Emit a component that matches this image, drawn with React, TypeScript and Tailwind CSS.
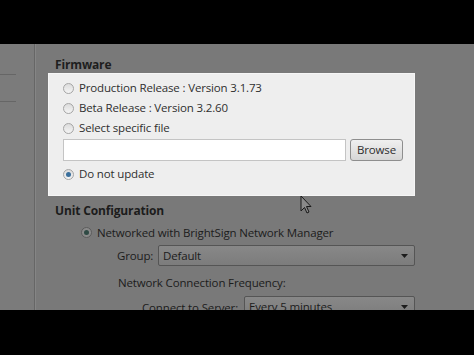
import React from "react";

const font = { fontFamily: '"Open Sans", "Noto Sans", sans-serif' };

function Radio({ checked, dim }: { checked?: boolean; dim?: boolean }) {
  return (
    <span
      className={`relative inline-flex h-[11px] w-[11px] shrink-0 items-center justify-center rounded-full border ${
        dim ? "border-[#5c5c5c] bg-[#8a8a8a]" : "border-[#a5a5a5] bg-gradient-to-b from-[#dcdcdc] to-[#f4f4f4]"
      }`}
    >
      {checked && (
        <span
          className={`h-[5px] w-[5px] rounded-full ${dim ? "bg-[#2f4a44]" : "bg-[#3a6f9c]"}`}
        />
      )}
    </span>
  );
}

function Select({ value, className }: { value: string; className: string }) {
  return (
    <div
      className={`flex h-[21px] shrink-0 items-center justify-between rounded-[2px] border border-[#555] bg-gradient-to-b from-[#888] to-[#7c7c7c] pl-[4px] pr-[6px] text-[11.5px] text-[#1c1c1c] ${className}`}
    >
      <span>{value}</span>
      <svg width="7" height="4" viewBox="0 0 7 4">
        <path d="M0 0h7L3.5 4z" fill="#1c1c1c" />
      </svg>
    </div>
  );
}

function FirmwareBox() {
  const options = ["Production Release : Version 3.1.73", "Beta Release : Version 3.2.60", "Select specific file"];
  return (
    <div className="ml-[12px] w-[367px] border border-[#f6f6f6] bg-[#eeeeee] pb-[11px] pl-[14px] pt-[4px] text-[#2e2e2e]">
      {options.map((o) => (
        <div key={o} className="flex h-[20px] items-center gap-[5px]">
          <Radio />
          <span>{o}</span>
        </div>
      ))}
      <div className="mt-[1px] flex h-[22px] items-center gap-[4px]">
        <div className="h-[22px] w-[283px] border border-[#c4c4c4] bg-white" />
        <button className="flex h-[22px] w-[53px] items-center justify-center rounded-[3px] border border-[#8e8e8e] bg-gradient-to-b from-[#f0f0f0] to-[#d6d6d6] text-[#2e2e2e]">
          Browse
        </button>
      </div>
      <div className="mt-[3px] flex h-[20px] items-center gap-[5px]">
        <Radio checked />
        <span>Do not update</span>
      </div>
    </div>
  );
}

export default function App() {
  return (
    <div className="flex h-[355px] w-[474px] flex-col overflow-hidden bg-black text-[11.5px] tracking-[-0.15px]" style={font}>
      <div className="h-[44px] shrink-0 bg-black" />
      <div className="relative flex h-[266px] shrink-0 overflow-hidden bg-[#797979]">
        {/* left navigation strip */}
        <div className="flex w-[35px] shrink-0 flex-col border-r border-[#666] bg-[#7b7b7b]">
          <div className="h-[31px] w-[16px] border-b border-[#666]" />
          <div className="h-[27px] w-[16px] border-b border-[#666]" />
        </div>
        <div className="flex flex-1 flex-col border-l border-[#858585] pt-[12px] text-[#1c1c1c]">
          <div className="ml-[19px] h-[17px] text-[12px] font-bold leading-[17px] text-[#1e1e1e]">Firmware</div>
          <FirmwareBox />
          <div className="ml-[19px] mt-[7px] h-[16px] text-[12px] font-bold leading-[16px]">Unit Configuration</div>
          <div className="ml-[45px] mt-[5px] flex h-[20px] items-center gap-[5px]">
            <Radio checked dim />
            <span>Networked with BrightSign Network Manager</span>
          </div>
          <div className="ml-[81px] mt-[4px] flex w-[298px] items-center justify-between">
            <span>Group:</span>
            <Select value="Default" className="w-[257px]" />
          </div>
          <div className="ml-[82px] mt-[9px] h-[16px] leading-[16px]">Network Connection Frequency:</div>
          <div className="ml-[106px] mt-[5px] flex w-[273px] items-start justify-between">
            <span className="pt-[3px]">Connect to Server:</span>
            <Select value="Every 5 minutes" className="w-[171px]" />
          </div>
        </div>
        {/* mouse pointer */}
        <svg className="absolute left-[300px] top-[151px]" width="12" height="19" viewBox="0 0 12 19">
          <path d="M1 1v15l3.5-3.5 2.5 5.5 2-1-2.5-5.5H11z" fill="#8a8a8a" stroke="#1a1a1a" strokeWidth="1" strokeLinejoin="round" />
        </svg>
      </div>
      <div className="flex-1 bg-black" />
    </div>
  );
}
